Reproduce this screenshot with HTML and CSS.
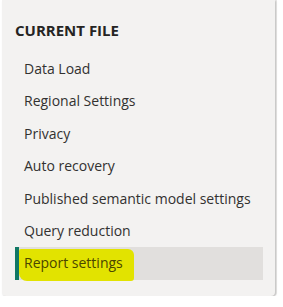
FILE: index.html
```html
<!DOCTYPE html>
<html lang="en">
<head>
    <meta charset="UTF-8">
    <title>Options - Current file</title>
    <link rel="stylesheet" href="styles.css">
</head>
<body>
    <div class="options-nav">
        <div class="nav-heading">CURRENT FILE</div>
        <ul class="nav-list">
            <li class="nav-item">Data Load</li>
            <li class="nav-item">Regional Settings</li>
            <li class="nav-item">Privacy</li>
            <li class="nav-item">Auto recovery</li>
            <li class="nav-item">Published semantic model settings</li>
            <li class="nav-item">Query reduction</li>
            <li class="nav-item selected">
                <span class="marker"></span>
                <span class="label">Report settings</span>
            </li>
        </ul>
    </div>
</body>
</html>
```

FILE: styles.css
```css
:root {
    --panel: #f3f2f1;
    --text: #323130;
    --selected: #e1dfdd;
    --accent: #117865;
    --marker: #e2e300;
}

body {
    margin: 0;
    background: #fff;
    font-family: 'Open Sans', 'Noto Sans', sans-serif;
}

.options-nav {
    margin-left: 2px;
    width: 273px;
    height: 296px;
    box-sizing: border-box;
    padding: 19px 12px 0 13px;
    background: var(--panel);
    border-radius: 0 0 4px 4px;
    box-shadow: 1px 1px 2px rgba(0,0,0,0.18), 2px 0 0 #e9e8e7;
}

.nav-heading {
    font-size: 15px;
    font-weight: 700;
    line-height: 22px;
    color: #252423;
    margin-bottom: 12px;
}

.nav-list {
    list-style: none;
    margin: 0;
    padding: 0;
}

.nav-item {
    height: 32.4px;
    line-height: 32.4px;
    padding-left: 9px;
    font-size: 14px;
    color: var(--text);
    white-space: nowrap;
    position: relative;
}

.nav-item.selected {
    background: var(--selected);
    border-left: 4px solid var(--accent);
    padding-left: 5px;
}

/* yellow highlighter stroke over the label */
.marker {
    position: absolute;
    left: 0;
    top: 2px;
    width: 115px;
    height: 32px;
    background: var(--marker);
    border-radius: 2px 6px 3px 8px;
}

.label {
    position: relative;
    color: #4a4600;
}
```
